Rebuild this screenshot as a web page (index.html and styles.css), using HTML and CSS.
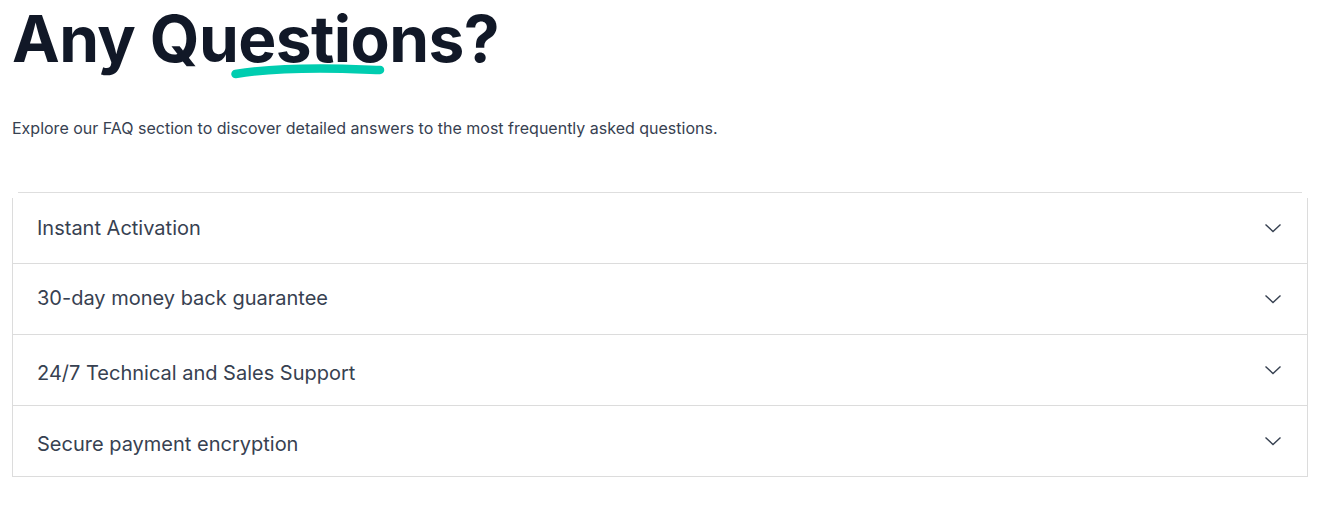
FILE: index.html
```html
<!DOCTYPE html>
<html lang="en">
<head>
<meta charset="utf-8">
<title>Any Questions?</title>
<link rel="stylesheet" href="styles.css">
</head>
<body>
<section class="faq-section">
  <h1 class="title">Any Qu<span class="mark">estio<svg class="swoosh" viewBox="0 0 160 20" width="160" height="20" aria-hidden="true"><path d="M5.5 14 C 30 10, 60 8.5, 90 8.5 C 115 8.5, 135 9.5, 150 10" fill="none" stroke="#00cdb0" stroke-width="8.5" stroke-linecap="round"/></svg></span>ns?</h1>
  <p class="lead">Explore our FAQ section to discover detailed answers to the most frequently asked questions.</p>
  <div class="faq">
    <div class="faq-cap"></div>
    <div class="faq-list">
      <div class="faq-item first"><span class="q">Instant Activation</span><svg class="chev" viewBox="0 0 20 20" width="20" height="20"><path d="M2.5 6.5 L10 13.5 L17.5 6.5" fill="none" stroke="#374151" stroke-width="1.4"/></svg></div>
      <div class="faq-item high"><span class="q">30-day money back guarantee</span><svg class="chev" viewBox="0 0 20 20" width="20" height="20"><path d="M2.5 6.5 L10 13.5 L17.5 6.5" fill="none" stroke="#374151" stroke-width="1.4"/></svg></div>
      <div class="faq-item low"><span class="q">24/7 Technical and Sales Support</span><svg class="chev" viewBox="0 0 20 20" width="20" height="20"><path d="M2.5 6.5 L10 13.5 L17.5 6.5" fill="none" stroke="#374151" stroke-width="1.4"/></svg></div>
      <div class="faq-item low"><span class="q">Secure payment encryption</span><svg class="chev" viewBox="0 0 20 20" width="20" height="20"><path d="M2.5 6.5 L10 13.5 L17.5 6.5" fill="none" stroke="#374151" stroke-width="1.4"/></svg></div>
    </div>
  </div>
</section>
</body>
</html>
```

FILE: styles.css
```css
* { box-sizing: border-box; }
html, body { margin: 0; padding: 0; background: #ffffff; }
body { font-family: Inter, "Noto Sans", "Liberation Sans", sans-serif; color: #111827; }

.faq-section { padding: 0 12px; }

.title {
  margin: 0;
  font-size: 64px;
  line-height: 78px;
  font-weight: 700;
  letter-spacing: -0.6px;
  color: #111827;
}
.mark { position: relative; }
.swoosh {
  position: absolute;
  left: -8px;
  top: 60px;
  width: 160px;
  height: 20px;
}

.lead {
  margin: 38px 0 0;
  font-size: 16px;
  line-height: 24px;
  color: #374151;
}

.faq { margin-top: 52px; }
.faq-cap {
  height: 6px;
  margin: 0 6px;
  border-top: 1px solid #dedede;
}
.faq-list {
  border: 1px solid #dcdcdc;
  border-top: none;
}
.faq-item {
  display: flex;
  align-items: center;
  justify-content: space-between;
  height: 71px;
  padding: 0 24px;
  border-top: 1px solid #dcdcdc;
}
.faq-item.first { border-top: none; height: 65px; padding-bottom: 6px; }
.faq-item.high .q { margin-bottom: 3px; }
.faq-item.low .q { margin-top: 6px; }
.q {
  font-size: 20px;
  line-height: 28px;
  color: #374151;
}
.chev { flex: none; }
```
